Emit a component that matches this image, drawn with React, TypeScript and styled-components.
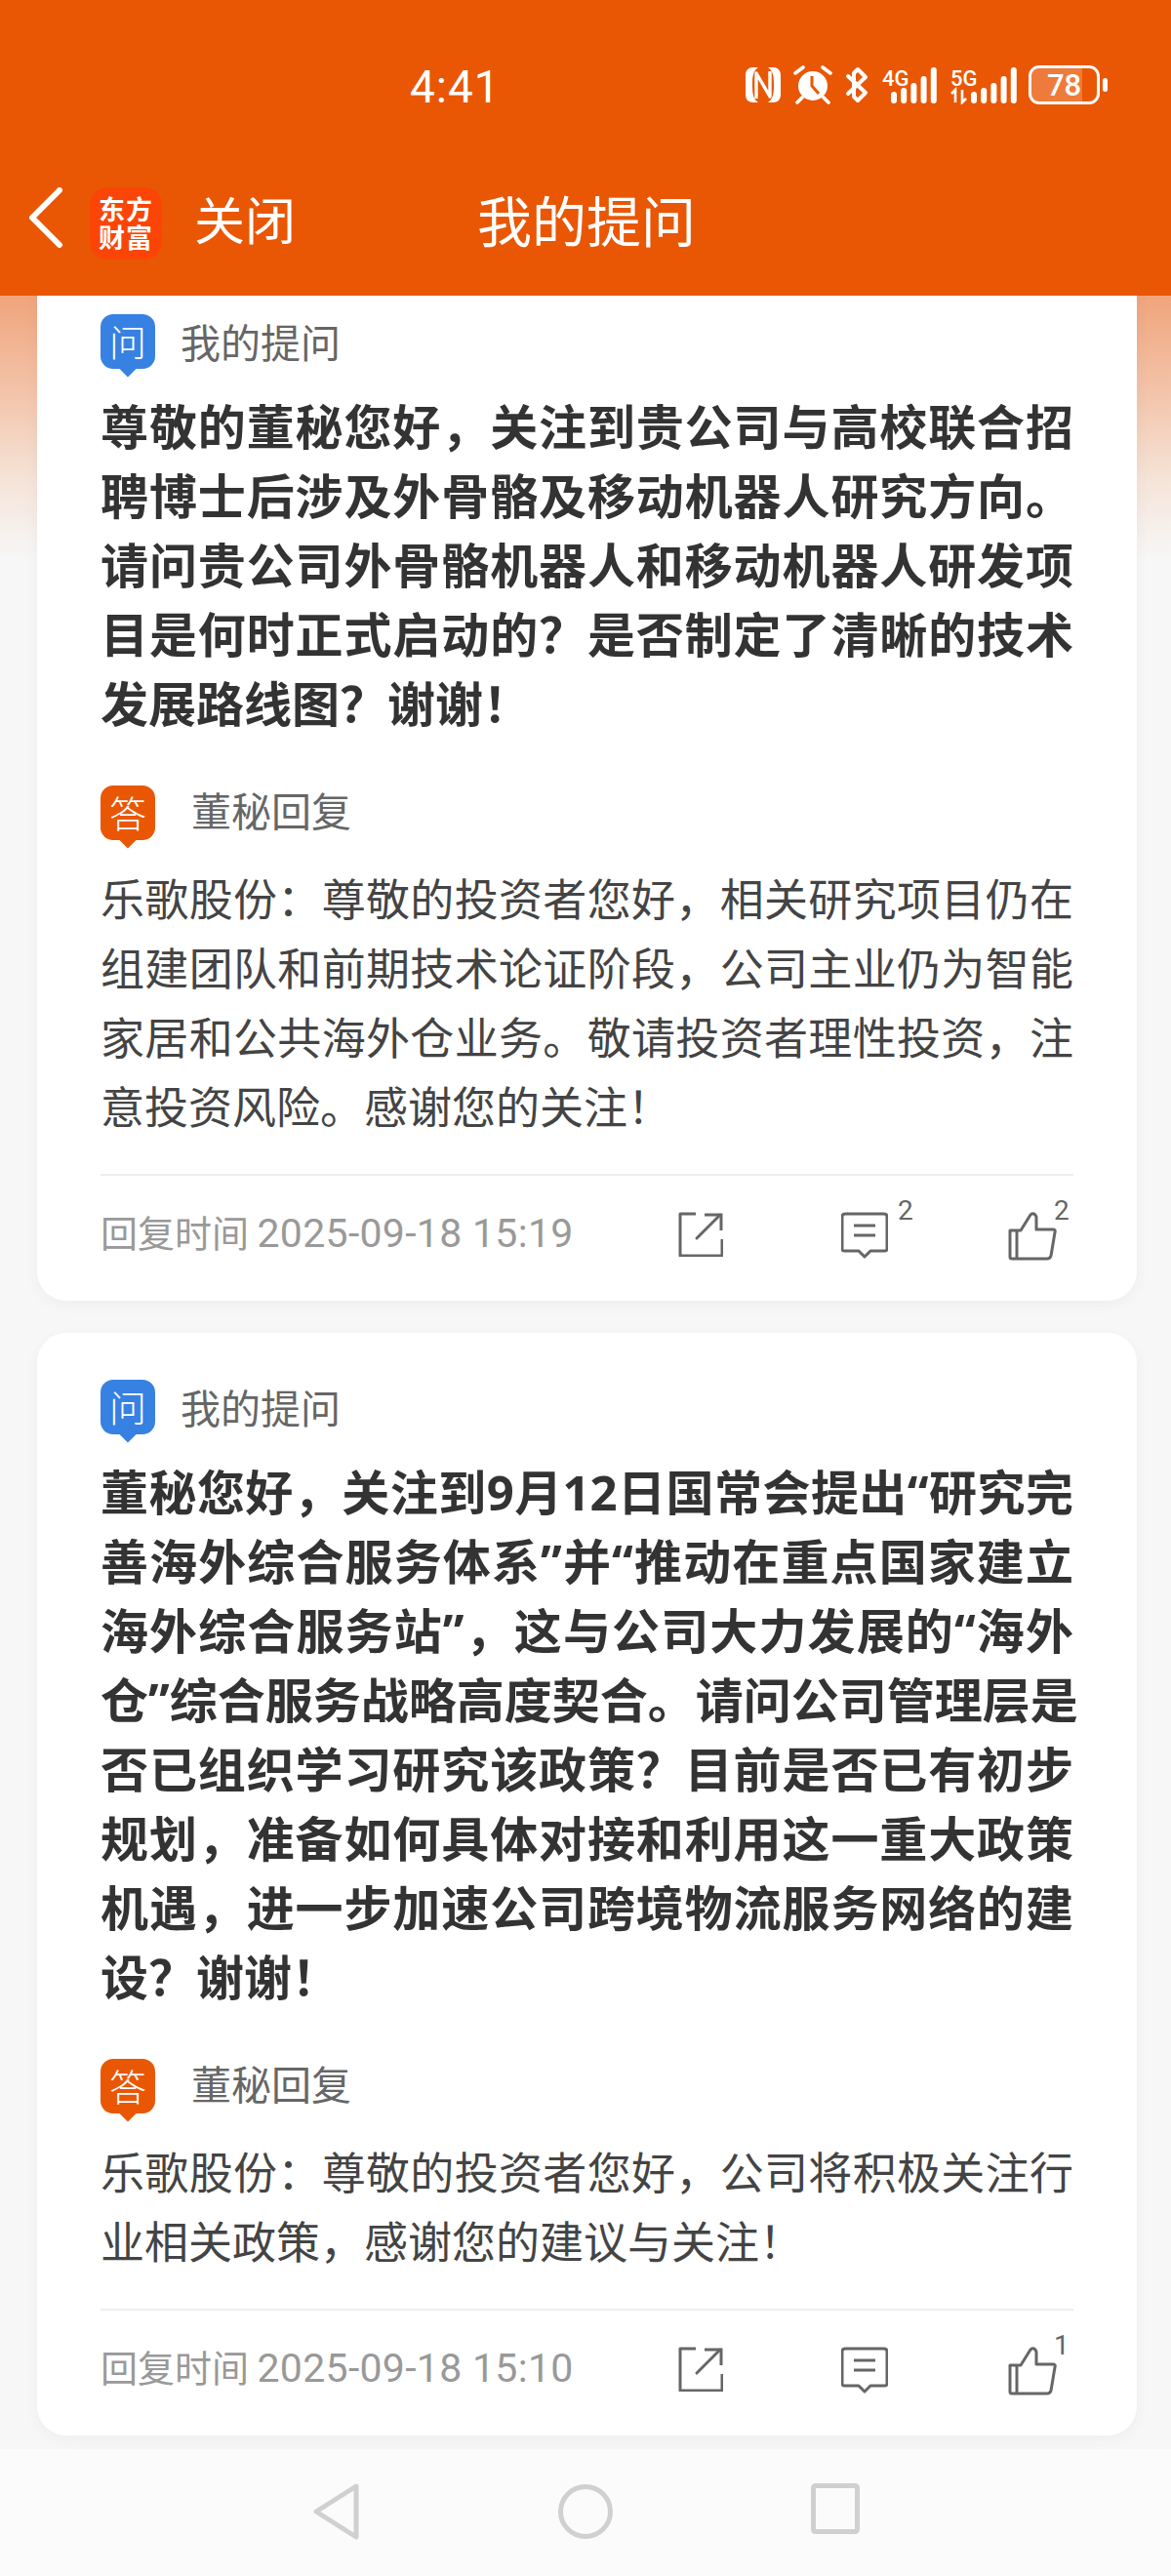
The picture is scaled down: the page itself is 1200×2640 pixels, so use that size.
import styled, { createGlobalStyle } from 'styled-components';

const GlobalStyle = createGlobalStyle`
  html, body {
    margin: 0;
    padding: 0;
    background: #f5f6f8;
  }
  * {
    box-sizing: border-box;
  }
`;

interface qaItem {
  question: string[];
  answer: string[];
  time: string;
  comments?: number;
  likes?: number;
}

const QA_LIST: qaItem[] = [
  {
    question: [
      '尊敬的董秘您好，关注到贵公司与高校联合招',
      '聘博士后涉及外骨骼及移动机器人研究方向。',
      '请问贵公司外骨骼机器人和移动机器人研发项',
      '目是何时正式启动的？是否制定了清晰的技术',
      '发展路线图？谢谢！',
    ],
    answer: [
      '乐歌股份：尊敬的投资者您好，相关研究项目仍在',
      '组建团队和前期技术论证阶段，公司主业仍为智能',
      '家居和公共海外仓业务。敬请投资者理性投资，注',
      '意投资风险。感谢您的关注！',
    ],
    time: '2025-09-18 15:19',
    comments: 2,
    likes: 2,
  },
  {
    question: [
      '董秘您好，关注到9月12日国常会提出“研究完',
      '善海外综合服务体系”并“推动在重点国家建立',
      '海外综合服务站”，这与公司大力发展的“海外',
      '仓”综合服务战略高度契合。请问公司管理层是',
      '否已组织学习研究该政策？目前是否已有初步',
      '规划，准备如何具体对接和利用这一重大政策',
      '机遇，进一步加速公司跨境物流服务网络的建',
      '设？谢谢！',
    ],
    answer: [
      '乐歌股份：尊敬的投资者您好，公司将积极关注行',
      '业相关政策，感谢您的建议与关注！',
    ],
    time: '2025-09-18 15:10',
    likes: 1,
  },
];

function App() {
  return (
    <Screen>
      <GlobalStyle />
      <Header>
        <StatusBar>
          <Clock>4:41</Clock>
          <StatusIcons>
            <NfcIcon />
            <AlarmIcon />
            <BluetoothIcon />
            <SignalIcon label="4G" />
            <SignalIcon label="5G" arrows />
            <Battery>
              <BatteryBody>
                <BatteryFill />
                <BatteryLevel>78</BatteryLevel>
              </BatteryBody>
              <BatteryNub />
            </Battery>
          </StatusIcons>
        </StatusBar>
        <NavBar>
          <BackIcon />
          <AppLogo>
            东方
            <br />
            财富
          </AppLogo>
          <CloseText>关闭</CloseText>
          <NavTitle>我的提问</NavTitle>
        </NavBar>
      </Header>
      <Feed>
        <FeedScroll>
          {QA_LIST.map((item) => (
            <Card key={item.time}>
              <TagRow>
                <Badge color="#3781e3">问</Badge>
                <TagLabel gap={26} drop={3}>
                  我的提问
                </TagLabel>
              </TagRow>
              <Question>
                {item.question.map((line, index) => (
                  <Line key={line} justified={index !== item.question.length - 1}>
                    {line}
                  </Line>
                ))}
              </Question>
              <AnswerTagRow>
                <Badge color="#e95704">答</Badge>
                <TagLabel gap={37} drop={0}>
                  董秘回复
                </TagLabel>
              </AnswerTagRow>
              <Answer>
                {item.answer.map((line, index) => (
                  <Line key={line} justified={index !== item.answer.length - 1}>
                    {line}
                  </Line>
                ))}
              </Answer>
              <Footer>
                <ReplyTime>
                  回复时间 <TimeValue>{item.time}</TimeValue>
                </ReplyTime>
                <Actions>
                  <Action>
                    <ShareIcon />
                  </Action>
                  <Action>
                    <CommentIcon />
                    {item.comments && <Count offset={58}>{item.comments}</Count>}
                  </Action>
                  <Action>
                    <LikeIcon />
                    {item.likes && <Count offset={47}>{item.likes}</Count>}
                  </Action>
                </Actions>
              </Footer>
            </Card>
          ))}
        </FeedScroll>
      </Feed>
      <BottomNav>
        <svg width="50" height="58" viewBox="0 0 50 58" fill="none">
          <path d="M45 3 L4 29 L45 55 Z" stroke="#d0d0d0" strokeWidth="5" strokeLinejoin="round" />
        </svg>
        <svg width="58" height="58" viewBox="0 0 58 58" fill="none">
          <circle cx="29" cy="29" r="25.5" stroke="#d0d0d0" strokeWidth="5" />
        </svg>
        <svg width="50" height="52" viewBox="0 0 50 52" fill="none">
          <rect x="2.5" y="2.5" width="45" height="47" rx="2" stroke="#d0d0d0" strokeWidth="5" />
        </svg>
      </BottomNav>
    </Screen>
  );
}

function NfcIcon() {
  return (
    <svg width="36" height="36" viewBox="0 0 36 36">
      <path d="M8 0 H13 C8 4 7 8 7 18 C7 28 8 32 13 36 H8 C3 36 0 33 0 28 V8 C0 3 3 0 8 0 Z" fill="#fff" />
      <path d="M28 36 H23 C28 32 29 28 29 18 C29 8 28 4 23 0 H28 C33 0 36 3 36 8 V28 C36 33 33 36 28 36 Z" fill="#fff" />
      <path d="M11 32 V6 L25 30 V4" fill="none" stroke="#fff" strokeWidth="3.4" strokeLinejoin="round" />
    </svg>
  );
}

function AlarmIcon() {
  return (
    <svg width="42" height="40" viewBox="0 0 42 40">
      <circle cx="21" cy="21" r="15" fill="#fff" />
      <path d="M20 11 V21 L27 29" fill="none" stroke="#e95704" strokeWidth="3" />
      <path
        d="M3 8 L11 2 M39 8 L31 2 M10 33 L5 38 M32 33 L37 38"
        fill="none"
        stroke="#fff"
        strokeWidth="3.6"
        strokeLinecap="round"
      />
    </svg>
  );
}

function BluetoothIcon() {
  return (
    <svg width="26" height="38" viewBox="0 0 26 38">
      <path
        d="M3 10 L21 27 L13 35 L9 31 V7 L13 3 L21 11 L3 28"
        fill="none"
        stroke="#fff"
        strokeWidth="4"
        strokeLinecap="round"
        strokeLinejoin="round"
      />
    </svg>
  );
}

const SIGNAL_BARS = [12, 16, 21, 28, 37];

function SignalIcon({ label, arrows }: { label: string; arrows?: boolean }) {
  const firstBar = arrows ? 21 : 9;
  const width = arrows ? 68 : 58;
  return (
    <svg width={width} height="40" viewBox={`0 0 ${width} 40`}>
      <text x="0" y="21" fontFamily="Roboto, sans-serif" fontSize="22" fontWeight="500" fill="#fff">
        {label}
      </text>
      {arrows && (
        <path d="M5 38 V25 L1 29 M12 25 V38 L16 34" fill="none" stroke="#fff" strokeWidth="2.6" />
      )}
      {SIGNAL_BARS.map((height, index) => (
        <rect
          key={height}
          x={firstBar + index * 10.2}
          y={39 - height}
          width="6"
          height={height}
          rx="3"
          fill="#fff"
        />
      ))}
    </svg>
  );
}

function BackIcon() {
  return (
    <svg width="36" height="62" viewBox="0 0 36 62">
      <path
        d="M32 3 L4 31 L32 59"
        fill="none"
        stroke="#fff"
        strokeWidth="6"
        strokeLinecap="round"
        strokeLinejoin="round"
      />
    </svg>
  );
}

function ShareIcon() {
  return (
    <svg width="46" height="46" viewBox="0 0 46 46" fill="none" stroke="#666" strokeWidth="3">
      <path d="M18 2 H2 V45 H45 V28" strokeLinejoin="round" />
      <path d="M19 27 L43 3" strokeLinecap="round" />
      <path d="M27 3 H44 V19" />
    </svg>
  );
}

function CommentIcon() {
  return (
    <svg width="48" height="48" viewBox="0 0 48 48" fill="none" stroke="#666" strokeWidth="3">
      <path
        d="M4 2 H44 Q47 2 47 5 V38 Q47 40 44 40 H30 L24 46 L18 40 H4 Q1 40 1 38 V5 Q1 2 4 2 Z"
        strokeLinejoin="round"
      />
      <path d="M13 14 H35 M13 24 H35" />
    </svg>
  );
}

function LikeIcon() {
  return (
    <svg width="50" height="50" viewBox="0 0 50 50" fill="none" stroke="#666" strokeWidth="3">
      <path
        d="M2 19 H13 L23 3 Q27 0 29 5 V18 H46 Q49 18 48 21 L44 45 Q43 48 40 48 H4 Q2 48 2 46 Z"
        strokeLinejoin="round"
      />
      <path d="M9 19 V48" />
    </svg>
  );
}

const Screen = styled.div`
  width: 1200px;
  height: 2640px;
  display: flex;
  flex-direction: column;
  overflow: hidden;
  font-family: 'Noto Sans', 'Noto Sans CJK SC', sans-serif;
`;

const Header = styled.header`
  height: 303px;
  flex-shrink: 0;
  background-color: #e95704;
  color: #ffffff;
`;

const StatusBar = styled.div`
  height: 160px;
  padding: 66px 65px 0 420px;
  display: flex;
  align-items: flex-start;
  justify-content: space-between;
`;

const Clock = styled.div`
  font-family: Roboto, sans-serif;
  font-size: 46px;
  line-height: 46px;
  letter-spacing: 1px;
`;

const StatusIcons = styled.div`
  display: flex;
  align-items: center;
  gap: 12px;
  height: 42px;
`;

const Battery = styled.div`
  display: flex;
  align-items: center;
  gap: 3px;
`;

const BatteryBody = styled.div`
  position: relative;
  width: 73px;
  height: 40px;
  border: 3px solid #ffffff;
  border-radius: 11px;
  overflow: hidden;
  display: flex;
  align-items: center;
  justify-content: center;
`;

const BatteryFill = styled.div`
  position: absolute;
  left: 0;
  top: 0;
  bottom: 0;
  width: 78%;
  background: rgba(255, 255, 255, 0.22);
`;

const BatteryLevel = styled.span`
  position: relative;
  font-family: Roboto, sans-serif;
  font-size: 31px;
  font-weight: 500;
  line-height: 1;
`;

const BatteryNub = styled.div`
  width: 5px;
  height: 14px;
  border-radius: 3px;
  background: #ffffff;
`;

const NavBar = styled.nav`
  height: 143px;
  padding: 32px 0 0 29px;
  display: flex;
  align-items: flex-start;
`;

const AppLogo = styled.div`
  width: 74px;
  height: 74px;
  margin-left: 27px;
  padding-top: 8px;
  border-radius: 18px;
  background-color: #fb4507;
  font-size: 27px;
  font-weight: 700;
  line-height: 29px;
  letter-spacing: 1px;
  text-align: center;
`;

const CloseText = styled.div`
  margin-left: 33px;
  font-size: 52px;
  line-height: 68px;
`;

const NavTitle = styled.h1`
  margin: 0 0 0 186px;
  font-size: 56px;
  font-weight: 400;
  line-height: 68px;
`;

const Feed = styled.main`
  flex: 1;
  min-height: 0;
  overflow: hidden;
  padding: 0 35px 0 38px;
  background: linear-gradient(180deg, #f0a47c 0, #f3c4aa 100px, #f5e4d8 190px, #f7f7f7 270px);
`;

const FeedScroll = styled.div`
  margin-top: -29px;
  display: flex;
  flex-direction: column;
  gap: 33px;
`;

const Card = styled.section`
  padding: 48px 65px 0;
  background: #ffffff;
  border-radius: 30px;
  box-shadow: 0 4px 14px rgba(60, 70, 90, 0.05);
`;

const TagRow = styled.div`
  height: 80px;
  display: flex;
  align-items: flex-start;
`;

const AnswerTagRow = styled(TagRow)`
  height: 81px;
  margin-top: 48px;
`;

const Badge = styled.div<{ color: string }>`
  position: relative;
  flex-shrink: 0;
  width: 56px;
  height: 56px;
  border-radius: 13px;
  background-color: ${(props) => props.color};
  color: #ffffff;
  font-size: 38px;
  font-weight: 300;
  line-height: 56px;
  text-align: center;
  &::after {
    content: '';
    position: absolute;
    left: 22px;
    bottom: -6px;
    width: 12px;
    height: 12px;
    background-color: ${(props) => props.color};
    transform: rotate(45deg);
  }
`;

const TagLabel = styled.div<{ gap: number; drop: number }>`
  margin: ${(props) => props.drop}px 0 0 ${(props) => props.gap}px;
  color: #666666;
  font-size: 41px;
  line-height: 52px;
`;

const Question = styled.div`
  color: #333333;
  font-size: 49px;
  font-weight: 700;
  line-height: 71px;
`;

const Answer = styled.div`
  color: #444444;
  font-size: 45px;
  line-height: 71px;
`;

const Line = styled.div<{ justified: boolean }>`
  white-space: nowrap;
  text-align: ${(props) => (props.justified ? 'justify' : 'left')};
  text-align-last: ${(props) => (props.justified ? 'justify' : 'left')};
`;

const Footer = styled.div`
  margin-top: 33px;
  height: 130px;
  padding-bottom: 16px;
  border-top: 2px solid #eeeeee;
  display: flex;
  align-items: center;
  justify-content: space-between;
`;

const ReplyTime = styled.div`
  color: #999999;
  font-family: 'Noto Sans CJK SC', sans-serif;
  font-size: 38px;
`;

const TimeValue = styled.span`
  font-family: Roboto, sans-serif;
  font-size: 41px;
  letter-spacing: 0.3px;
`;

const Actions = styled.div`
  width: 405px;
  margin-top: 12px;
  display: grid;
  grid-template-columns: 167px 171px 1fr;
`;

const Action = styled.div`
  position: relative;
  display: flex;
`;

const Count = styled.span<{ offset: number }>`
  position: absolute;
  left: ${(props) => props.offset}px;
  top: -17px;
  color: #666666;
  font-family: Roboto, sans-serif;
  font-size: 28px;
  line-height: 32px;
`;

const BottomNav = styled.footer`
  height: 130px;
  flex-shrink: 0;
  padding: 35px 0 0 320px;
  background-color: #fbfbfb;
  display: grid;
  grid-template-columns: 251px 260px 50px;
  align-items: start;
`;

export default App;
